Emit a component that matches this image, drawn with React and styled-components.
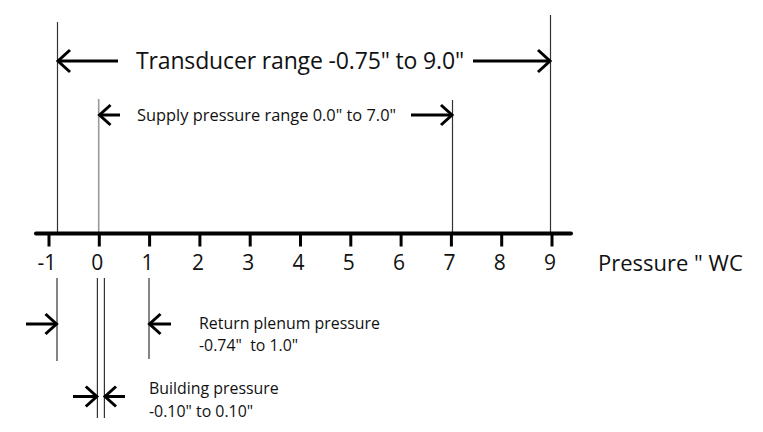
import React from 'react';
import styled, { createGlobalStyle } from 'styled-components';

// -------------------- Scale -------------------- //
const AXIS_Y = 233.5;
const UNIT = 50.3;
const X0 = 99.3; // x of 0" WC
const toX = (v) => X0 + v * UNIT;
const TICKS = [-1, 0, 1, 2, 3, 4, 5, 6, 7, 8, 9];

// -------------------- Styled Components -------------------- //
const GlobalStyle = createGlobalStyle`
  html, body {
    margin: 0;
    padding: 0;
    background: #fff;
  }
  body {
    font-family: 'Open Sans', 'Noto Sans', 'DejaVu Sans', sans-serif;
    color: #111;
  }
`;

const Canvas = styled.div`
  position: relative;
  width: 763px;
  height: 432px;
  overflow: hidden;
  background: #fff;
`;

const Drawing = styled.svg`
  position: absolute;
  inset: 0;
  width: 763px;
  height: 432px;
`;

const Label = styled.span`
  position: absolute;
  left: ${(p) => p.$x}px;
  top: ${(p) => p.$y}px;
  font-size: ${(p) => p.$size}px;
  letter-spacing: ${(p) => p.$track || 0}px;
  line-height: 1;
  white-space: pre;
  color: #111;
  transform: ${(p) => (p.$center ? 'translateX(-50%)' : 'none')};
`;

const Note = styled.div`
  position: absolute;
  left: ${(p) => p.$x}px;
  top: ${(p) => p.$y}px;
  display: flex;
  flex-direction: column;
  font-size: ${(p) => p.$size}px;
  line-height: ${(p) => p.$lh}px;
  white-space: pre;
  color: #111;
`;

// -------------------- Drawing helpers -------------------- //
const Arrow = ({ from, to, y, head = 12, spread = 11 }) => {
  const dir = to > from ? 1 : -1;
  const back = to - dir * head;
  return (
    <g stroke="#000" strokeWidth="3" fill="none" strokeLinecap="butt" strokeLinejoin="miter">
      <line x1={from} y1={y} x2={to - dir * 1.5} y2={y} />
      <polyline points={`${back},${y - spread} ${to},${y} ${back},${y + spread}`} />
    </g>
  );
};

const VLine = ({ x, y1, y2, color = '#333', width = 1.2 }) => (
  <line x1={x} y1={y1} x2={x} y2={y2} stroke={color} strokeWidth={width} />
);

const App = () => (
  <>
    <GlobalStyle />
    <Canvas>
      <Drawing viewBox="0 0 763 432">
        {/* range limit lines above the axis */}
        <VLine x={57.5} y1={22} y2={232} />
        <VLine x={550.5} y1={15} y2={232} />
        <VLine x={98.7} y1={99} y2={232} color="#999" width={1.6} />
        <VLine x={452.5} y1={100} y2={232} />

        {/* range limit lines below the axis */}
        <VLine x={57} y1={278} y2={361} />
        <VLine x={149} y1={278} y2={359} />
        <VLine x={97.4} y1={278} y2={418} />
        <VLine x={104.4} y1={278} y2={418} />

        {/* axis */}
        <line x1={36} y1={AXIS_Y} x2={571} y2={AXIS_Y} stroke="#000" strokeWidth="4" strokeLinecap="round" />
        {TICKS.map((t) => (
          <line key={t} x1={toX(t)} y1={AXIS_Y} x2={toX(t)} y2={246.5} stroke="#000" strokeWidth="3" />
        ))}

        {/* arrows */}
        <Arrow from={118} to={58} y={61} />
        <Arrow from={473} to={550} y={61} />
        <Arrow from={120} to={99.5} y={115} head={11} spread={10} />
        <Arrow from={411} to={452} y={115} head={11} spread={10} />
        <Arrow from={26} to={56.5} y={324} head={11} spread={10} />
        <Arrow from={171} to={149.5} y={324} head={11} spread={10} />
        <Arrow from={73} to={96.8} y={396.5} head={11} spread={10} />
        <Arrow from={125} to={105} y={396.5} head={11} spread={10} />
      </Drawing>

      <Label $x={136} $y={48.5} $size={23} $track={-0.15}>Transducer range -0.75" to 9.0"</Label>
      <Label $x={137} $y={107} $size={16.4}>Supply pressure range 0.0" to 7.0"</Label>

      {TICKS.map((t) => (
        <Label key={t} $x={toX(t) - 2} $y={251.5} $size={21} $center>
          {t}
        </Label>
      ))}
      <Label $x={598} $y={250.5} $size={22}>Pressure " WC</Label>

      <Note $x={199} $y={312} $size={15.9} $lh={22}>
        <span>Return plenum pressure</span>
        <span>-0.74"  to 1.0"</span>
      </Note>
      <Note $x={149} $y={377} $size={15.9} $lh={23}>
        <span>Building pressure</span>
        <span>-0.10" to 0.10"</span>
      </Note>
    </Canvas>
  </>
);

export default App;
